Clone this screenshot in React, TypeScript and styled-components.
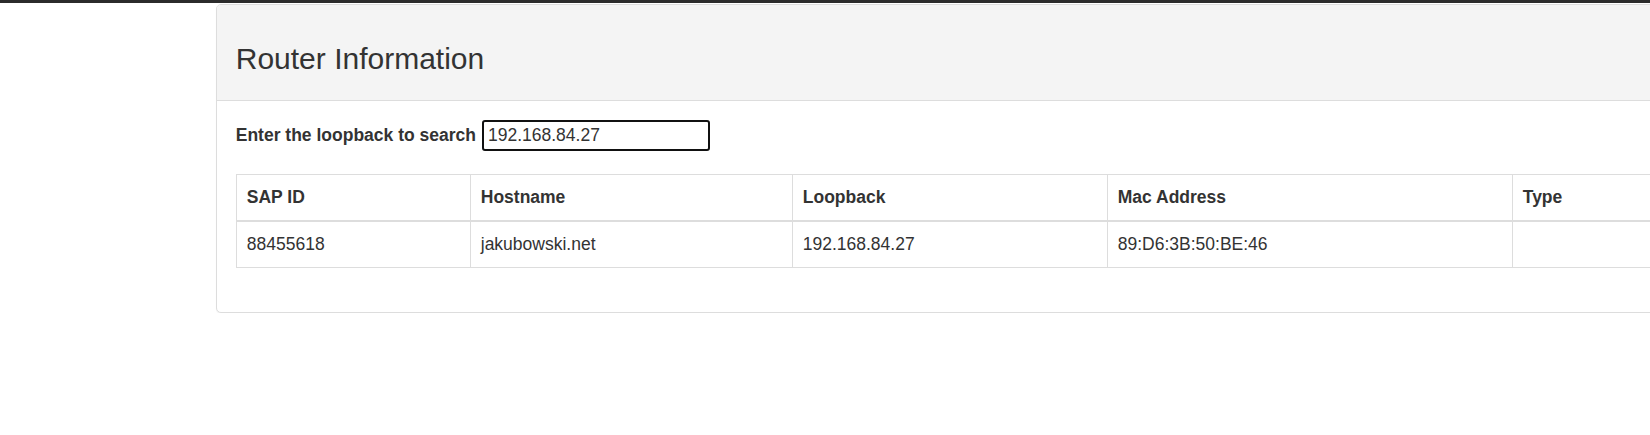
import React, { useEffect, useRef } from "react";
import styled, { createGlobalStyle } from "styled-components";

const GlobalStyle = createGlobalStyle`
  html, body {
    margin: 0;
    padding: 0;
    overflow: hidden;
    background: #ffffff;
  }
  body {
    font-family: "Liberation Sans", Arial, Helvetica, sans-serif;
    font-size: 17.5px;
    line-height: 25px;
    color: #333333;
  }
  * { box-sizing: border-box; }
`;

const TopBar = styled.div`
  height: 3px;
  background: #2b2b2b;
`;

const Page = styled.main`
  padding: 1px 0 0 216px;
`;

const Panel = styled.section`
  width: 1500px;
  background: #ffffff;
  border: 1px solid #dddddd;
  border-radius: 5px;
  box-shadow: 0 1px 1px rgba(0, 0, 0, 0.05);
`;

const PanelHeading = styled.header`
  background: #f4f4f4;
  border-bottom: 1px solid #dddddd;
  border-radius: 4px 4px 0 0;
  padding: 12.5px 18.75px;
`;

const Title = styled.h3`
  margin: 24.5px 0 12.5px;
  font-size: 30px;
  font-weight: 400;
  line-height: 1.1;
  color: #333333;
`;

const PanelBody = styled.div`
  padding: 18.75px;
`;

const SearchRow = styled.div`
  display: flex;
  align-items: center;
  gap: 6px;
  height: 31px;
`;

const Label = styled.label`
  font-weight: 700;
`;

const SearchInput = styled.input`
  width: 228px;
  height: 31px;
  padding: 1px 4px;
  border: 2px solid #111111;
  border-radius: 3px;
  font-family: "Liberation Sans", Arial, sans-serif;
  font-size: 17.5px;
  color: #333333;
  caret-color: #000000;
  background: #ffffff;
  outline: none;
`;

const Table = styled.table`
  width: 100%;
  margin: 23px 0 25px;
  border-collapse: collapse;
  table-layout: fixed;
  border: 1px solid #dddddd;
`;

const HeadCell = styled.th`
  padding: 10px;
  text-align: left;
  font-weight: 700;
  line-height: 25px;
  border: 1px solid #dddddd;
  border-bottom: 2px solid #dddddd;
  vertical-align: bottom;
`;

const Cell = styled.td`
  padding: 10px;
  line-height: 25px;
  border: 1px solid #dddddd;
  vertical-align: top;
`;

const columns = [
  { key: "sap", label: "SAP ID", width: 234 },
  { key: "host", label: "Hostname", width: 322 },
  { key: "loop", label: "Loopback", width: 315 },
  { key: "mac", label: "Mac Address", width: 405 },
  { key: "type", label: "Type", width: undefined },
];

const rows = [
  { sap: "88455618", host: "jakubowski.net", loop: "192.168.84.27", mac: "89:D6:3B:50:BE:46", type: "" },
];

export default function App() {
  const inputRef = useRef<HTMLInputElement>(null);

  useEffect(() => {
    const el = inputRef.current;
    if (el) {
      el.focus();
      const end = el.value.length;
      el.setSelectionRange(end, end);
    }
  }, []);

  return (
    <>
      <GlobalStyle />
      <TopBar />
      <Page>
        <Panel>
          <PanelHeading>
            <Title>Router Information</Title>
          </PanelHeading>
          <PanelBody>
            <SearchRow>
              <Label htmlFor="loopback">Enter the loopback to search</Label>
              <SearchInput id="loopback" ref={inputRef} defaultValue="192.168.84.27" />
            </SearchRow>
            <Table>
              <colgroup>
                {columns.map((c) => (
                  <col key={c.key} style={c.width ? { width: c.width } : undefined} />
                ))}
              </colgroup>
              <thead>
                <tr>
                  {columns.map((c) => (
                    <HeadCell key={c.key}>{c.label}</HeadCell>
                  ))}
                </tr>
              </thead>
              <tbody>
                {rows.map((r) => (
                  <tr key={r.sap}>
                    <Cell>{r.sap}</Cell>
                    <Cell>{r.host}</Cell>
                    <Cell>{r.loop}</Cell>
                    <Cell>{r.mac}</Cell>
                    <Cell>{r.type}</Cell>
                  </tr>
                ))}
              </tbody>
            </Table>
          </PanelBody>
        </Panel>
      </Page>
    </>
  );
}
